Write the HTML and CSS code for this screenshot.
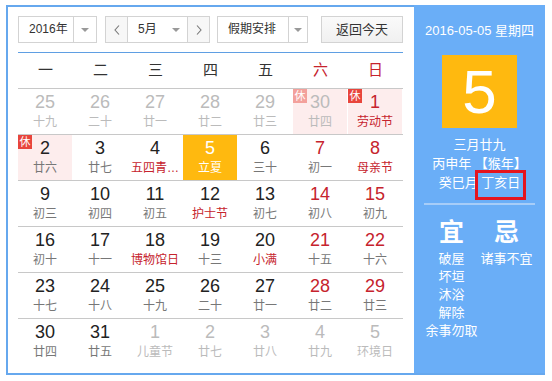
FILE: index.html
```html
<!DOCTYPE html>
<html lang="zh-CN">
<head>
<meta charset="utf-8">
<title>万年历</title>
<link rel="stylesheet" href="styles.css">
</head>
<body>
<div class="frame">
  <div class="main">
    <div class="toolbar">
      <div class="sel sel-year"><span class="sel-text">2016年</span><span class="sel-arrow"><i class="tri"></i></span></div>
      <div class="month-group">
        <span class="nav-btn"><svg width="6" height="10" viewBox="0 0 6 10"><polyline points="5,0.5 1,5 5,9.5" fill="none" stroke="#777" stroke-width="1.1"/></svg></span>
        <span class="month-sel"><span class="sel-text">5月</span><i class="tri"></i></span>
        <span class="nav-btn"><svg width="6" height="10" viewBox="0 0 6 10"><polyline points="1,0.5 5,5 1,9.5" fill="none" stroke="#777" stroke-width="1.1"/></svg></span>
      </div>
      <div class="sel sel-holiday"><span class="sel-text">假期安排</span><span class="sel-arrow"><i class="tri"></i></span></div>
      <div class="btn-today">返回今天</div>
    </div>
    <div class="weekdays">
      <span>一</span><span>二</span><span>三</span><span>四</span><span>五</span><span class="wkend">六</span><span class="wkend">日</span>
    </div>
    <div class="grid">
      <div class="row">
        <div class="cell other"><span class="num">25</span><span class="lunar">十九</span></div>
        <div class="cell other"><span class="num">26</span><span class="lunar">二十</span></div>
        <div class="cell other"><span class="num">27</span><span class="lunar">廿一</span></div>
        <div class="cell other"><span class="num">28</span><span class="lunar">廿二</span></div>
        <div class="cell other"><span class="num">29</span><span class="lunar">廿三</span></div>
        <div class="cell other rest"><span class="badge faded">休</span><span class="num">30</span><span class="lunar">廿四</span></div>
        <div class="cell rest"><span class="badge">休</span><span class="num red">1</span><span class="lunar red">劳动节</span></div>
      </div>
      <div class="row">
        <div class="cell rest"><span class="badge">休</span><span class="num">2</span><span class="lunar">廿六</span></div>
        <div class="cell"><span class="num">3</span><span class="lunar">廿七</span></div>
        <div class="cell"><span class="num">4</span><span class="lunar red">五四青…</span></div>
        <div class="cell today"><span class="num">5</span><span class="lunar">立夏</span></div>
        <div class="cell"><span class="num">6</span><span class="lunar">三十</span></div>
        <div class="cell"><span class="num red">7</span><span class="lunar">初一</span></div>
        <div class="cell"><span class="num red">8</span><span class="lunar red">母亲节</span></div>
      </div>
      <div class="row">
        <div class="cell"><span class="num">9</span><span class="lunar">初三</span></div>
        <div class="cell"><span class="num">10</span><span class="lunar">初四</span></div>
        <div class="cell"><span class="num">11</span><span class="lunar">初五</span></div>
        <div class="cell"><span class="num">12</span><span class="lunar red">护士节</span></div>
        <div class="cell"><span class="num">13</span><span class="lunar">初七</span></div>
        <div class="cell"><span class="num red">14</span><span class="lunar">初八</span></div>
        <div class="cell"><span class="num red">15</span><span class="lunar">初九</span></div>
      </div>
      <div class="row">
        <div class="cell"><span class="num">16</span><span class="lunar">初十</span></div>
        <div class="cell"><span class="num">17</span><span class="lunar">十一</span></div>
        <div class="cell"><span class="num">18</span><span class="lunar red">博物馆日</span></div>
        <div class="cell"><span class="num">19</span><span class="lunar">十三</span></div>
        <div class="cell"><span class="num">20</span><span class="lunar red">小满</span></div>
        <div class="cell"><span class="num red">21</span><span class="lunar">十五</span></div>
        <div class="cell"><span class="num red">22</span><span class="lunar">十六</span></div>
      </div>
      <div class="row">
        <div class="cell"><span class="num">23</span><span class="lunar">十七</span></div>
        <div class="cell"><span class="num">24</span><span class="lunar">十八</span></div>
        <div class="cell"><span class="num">25</span><span class="lunar">十九</span></div>
        <div class="cell"><span class="num">26</span><span class="lunar">二十</span></div>
        <div class="cell"><span class="num">27</span><span class="lunar">廿一</span></div>
        <div class="cell"><span class="num red">28</span><span class="lunar">廿二</span></div>
        <div class="cell"><span class="num red">29</span><span class="lunar">廿三</span></div>
      </div>
      <div class="row last">
        <div class="cell"><span class="num">30</span><span class="lunar">廿四</span></div>
        <div class="cell"><span class="num">31</span><span class="lunar">廿五</span></div>
        <div class="cell other"><span class="num">1</span><span class="lunar">儿童节</span></div>
        <div class="cell other"><span class="num">2</span><span class="lunar">廿七</span></div>
        <div class="cell other"><span class="num">3</span><span class="lunar">廿八</span></div>
        <div class="cell other"><span class="num">4</span><span class="lunar">廿九</span></div>
        <div class="cell other"><span class="num">5</span><span class="lunar">环境日</span></div>
      </div>
    </div>
  </div>
  <div class="panel">
    <div class="p-date">2016-05-05 星期四</div>
    <div class="p-day">5</div>
    <div class="p-lunar">
      <div>三月廿九</div>
      <div>丙申年 【猴年】</div>
      <div>癸巳月 <span class="mark">丁亥日</span></div>
    </div>
    <div class="p-sep"></div>
    <div class="p-yiji">
      <div class="col">
        <div class="big">宜</div>
        <div>破屋</div>
        <div>坏垣</div>
        <div>沐浴</div>
        <div>解除</div>
        <div>余事勿取</div>
      </div>
      <div class="col">
        <div class="big">忌</div>
        <div>诸事不宜</div>
      </div>
    </div>
  </div>
</div>
</body>
</html>
```
FILE: styles.css
```css
html, body {
  margin: 0;
  padding: 0;
  background: #fff;
}
body {
  font-family: "Liberation Sans", Arial, "Noto Sans CJK SC", sans-serif;
  color: #333;
}
.frame {
  margin: 5px 0 0 6px;
  width: 539px;
  height: 370px;
  box-sizing: border-box;
  border: 2px solid #66a8ee;
  border-right: none;
  display: flex;
}
.main {
  width: 406px;
  padding: 9px 11px 0 10px;
  box-sizing: border-box;
}
.toolbar {
  display: flex;
  height: 27px;
  font-size: 12px;
  color: #333;
}
.sel {
  display: flex;
  border: 1px solid #d3d3d3;
  box-sizing: border-box;
  height: 27px;
  background: #fff;
}
.sel-text {
  line-height: 25px;
  padding-left: 10px;
}
.sel-year { width: 79px; }
.sel-year .sel-text { width: 44px; }
.sel-holiday { width: 91px; margin-left: 7px; }
.sel-holiday .sel-text { width: 60px; padding-left: 10px; }
.sel-arrow {
  flex: 1;
  border-left: 1px solid #d3d3d3;
  display: flex;
  align-items: center;
  justify-content: center;
}
.tri {
  display: inline-block;
  width: 0;
  height: 0;
  border-left: 4px solid transparent;
  border-right: 4px solid transparent;
  border-top: 4px solid #999;
}
.month-group {
  display: flex;
  margin-left: 8px;
  width: 105px;
  height: 27px;
  border: 1px solid #d3d3d3;
  box-sizing: border-box;
}
.nav-btn {
  width: 21px;
  display: flex;
  align-items: center;
  justify-content: center;
  background: #f7f7f7;
}
.nav-btn:first-child { border-right: 1px solid #d3d3d3; }
.nav-btn:last-child { border-left: 1px solid #d3d3d3; }
.month-sel {
  flex: 1;
  display: flex;
  align-items: center;
  background: #fff;
}
.month-sel .sel-text { padding-left: 10px; width: 34px; }
.btn-today {
  margin-left: auto;
  width: 82px;
  height: 27px;
  box-sizing: border-box;
  border: 1px solid #d3d3d3;
  background: linear-gradient(#fafafa, #f0f0f0);
  text-align: center;
  line-height: 25px;
  font-size: 13px;
  color: #333;
}
.weekdays {
  margin-top: 9px;
  border-top: 1px solid #5f9fe3;
  border-bottom: 1px solid #c8c8c8;
  display: grid;
  grid-template-columns: repeat(7, 55px);
  height: 35px;
  line-height: 33px;
  font-size: 15px;
  text-align: center;
  color: #333;
}
.weekdays .wkend { color: #c6232d; }
.row {
  display: grid;
  grid-template-columns: repeat(7, 55px);
  height: 46px;
  box-sizing: border-box;
  border-bottom: 1px solid #c8c8c8;
}
.row.last { border-bottom: none; }
.cell {
  position: relative;
  width: 54px;
  height: 45px;
  text-align: center;
  box-sizing: border-box;
  padding-top: 3px;
}
.num {
  display: block;
  font-size: 18px;
  line-height: 20px;
  color: #222;
}
.lunar {
  display: block;
  margin-top: 2px;
  font-size: 12px;
  line-height: 16px;
  color: #777;
  white-space: nowrap;
}
.red { color: #c6232d; }
.cell.other .num, .cell.other .lunar { color: #bbb; }
.cell.rest { background: #fdeded; }
.cell.today { background: #ffb90f; }
.cell.today .num, .cell.today .lunar { color: #fff; }
.badge {
  position: absolute;
  left: 0;
  top: 0;
  width: 14px;
  height: 14px;
  background: #e8453c;
  color: #fff;
  font-size: 11px;
  line-height: 14px;
  text-align: center;
}
.badge.faded { background: #f3a19c; }
.panel {
  width: 131px;
  margin-top: -2px;
  height: 368px;
  background: #6aaef7;
  color: #fff;
  text-align: center;
  font-size: 13px;
  position: relative;
}
.p-date {
  margin-top: 17px;
  line-height: 18px;
  font-size: 13px;
}
.p-day {
  margin: 15px auto 0;
  width: 75px;
  height: 73px;
  background: #ffb90f;
  color: #fff;
  font-size: 62px;
  line-height: 73px;
}
.p-lunar {
  margin-top: 7px;
  line-height: 19px;
}
.mark {
  position: relative;
  display: inline-block;
  line-height: 19px;
  vertical-align: top;
}
.mark::after {
  content: "";
  position: absolute;
  left: -6px;
  right: -6px;
  top: -3px;
  bottom: -8px;
  border: 3px solid #e5141f;
}
.p-sep {
  margin: 11px 10px 0;
  height: 2px;
  background: #a7cdf8;
}
.p-yiji {
  display: flex;
  padding: 0 10px;
  margin-top: 12px;
}
.col {
  width: 55px;
  line-height: 18px;
  white-space: nowrap;
}
.col .big {
  font-size: 25px;
  font-weight: bold;
  line-height: 30px;
  margin-bottom: 3px;
}
```
